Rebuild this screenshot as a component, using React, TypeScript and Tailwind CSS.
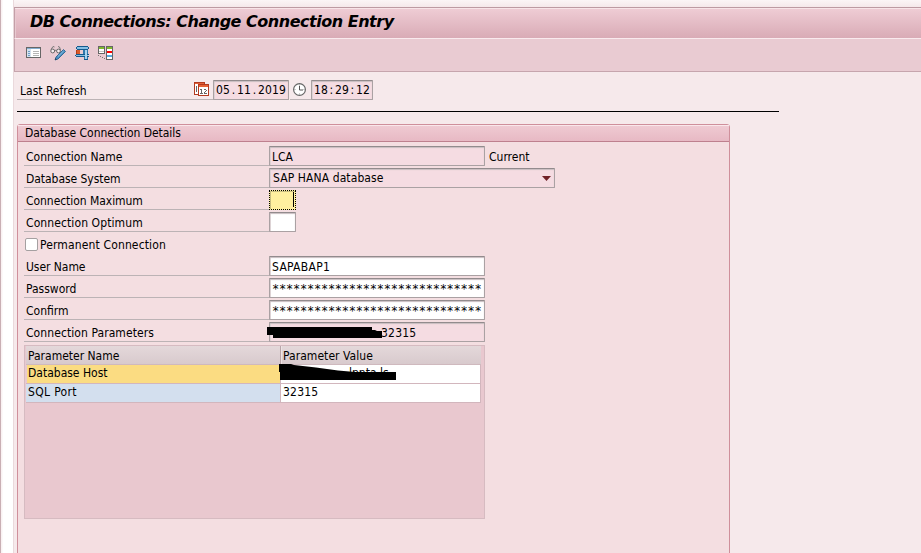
import type { ReactNode } from 'react';

const sans = "font-['DejaVu_Sans_Condensed','DejaVu_Sans',sans-serif] [font-stretch:condensed]";

function Label({ children, className = '' }: { children: ReactNode; className?: string }) {
  return <div className={`h-5 w-[245px] shrink-0 border-b border-[#bcb3b5] pl-[2px] leading-[22px] ${className}`}>{children}</div>;
}

function Field({ children, className }: { children?: ReactNode; className: string }) {
  return (
    <div
      className={`h-5 shrink-0 overflow-hidden rounded-[1px] border border-[#aaa1a3] border-t-[#928b8d] leading-[19px] whitespace-nowrap shadow-[inset_0_1px_1px_#c8bdc0,inset_1px_0_0_#dfd5d7] ${className}`}
    >
      {children}
    </div>
  );
}

function Row({ children }: { children: ReactNode }) {
  return <div className="flex h-[22px] pl-[6px]">{children}</div>;
}

/* Digits joined by separators that take the same advance as a digit. */
function Stamp({ parts, separator }: { parts: string[]; separator: string }) {
  return (
    <span className="tracking-[0.13px]">
      {parts.map((part, i) => (
        <span key={i}>
          {i > 0 && <span className="inline-block w-[7px] text-center">{separator}</span>}
          {part}
        </span>
      ))}
    </span>
  );
}

function ListIcon() {
  return (
    <svg width="16" height="16" viewBox="0 0 16 16" shapeRendering="crispEdges">
      <rect x="0.5" y="2.5" width="14" height="10" fill="#fff" stroke="#666" />
      <path d="M1 3h13v1H1z" fill="#85aed0" />
      <path d="M1 4h4v8H1z" fill="#d5e2ef" />
      <path d="M2 6h2v1H2zM2 8h2v1H2zM2 10h2v1H2z" fill="#6f9fc8" />
      <path d="M7 6h6v1H7zM7 8h6v1H7zM7 10h6v1H7z" fill="#b5b5b5" />
    </svg>
  );
}

function DisplayChangeIcon() {
  return (
    <svg width="17" height="16" viewBox="0 0 17 16">
      <path d="M1 4.500 3 1.500 4.500 2M8 1.500l1.500.5 1 3M4.500 5.300h2" fill="none" stroke="#777" />
      <circle cx="2.700" cy="6" r="1.900" fill="#f8eff1" stroke="#666" />
      <circle cx="8.500" cy="6" r="1.900" fill="#f8eff1" stroke="#666" />
      <path d="m6 12 7.500-7.500 2 2L8 14l-3 1z" fill="#4a90c2" stroke="#1f5b8a" strokeWidth=".8" />
      <path d="m8 11.500 5.600-5.500" stroke="#8bbddf" />
      <path d="m5 13 2 1.500-2 .5z" fill="#27435b" />
    </svg>
  );
}

function ClampIcon() {
  return (
    <svg width="15" height="16" viewBox="0 0 15 16" shapeRendering="crispEdges">
      <path d="M2 2h11v2H2zM1 10h12v1H1z" fill="#85bee4" />
      <path d="M2 1h11v1H2zM1 2h1v2H1zM2 4h11v1H2zM13 2h1v2h-1zM1 9h13v1H1zM0 10h1v1H0zM1 11h13v1H1z" fill="#135a8d" />
      <path d="M2 5h3v4H2z" fill="#d75a2b" />
      <path d="M1 5h1v4H1z" fill="#b63c16" />
      <path d="M8 5h5v4H8zM9 12h4v2H9z" fill="#2f78ad" />
      <path d="M10 5h2v9h-2z" fill="#a9d3ef" />
      <path d="M9 14h4v1H9z" fill="#135a8d" />
    </svg>
  );
}

function CompareIcon() {
  return (
    <svg width="16" height="16" viewBox="0 0 16 16" shapeRendering="crispEdges">
      <rect x=".5" y="1.500" width="6" height="7" fill="#fff" stroke="#666" />
      <path d="M1 2h5v2H1z" fill="#80b92d" />
      <path d="M1 6h5v1H1z" fill="#c5c5c5" />
      <rect x="8.500" y="1.500" width="6" height="13" fill="#fff" stroke="#666" />
      <path d="M9 2h5v2H9z" fill="#80b92d" />
      <path d="M9 6h5v2H9z" fill="#f00" />
      <path d="M9 10h5v2H9z" fill="#58a9dd" />
      <path d="M0 10h1v1H0zM2 11h1v1H2zM4 12h1v1H4zM6 13h1v1H6z" fill="#777" />
    </svg>
  );
}

function CalendarIcon() {
  return (
    <svg width="16" height="15" viewBox="0 0 16 15" shapeRendering="crispEdges">
      <rect x=".5" y=".5" width="10" height="12" fill="#fff" stroke="#b33a20" />
      <path d="M1 1h9v1H1z" fill="#e1613a" />
      <path d="M2 4h1v6H2z" fill="#666" />
      <rect x="4.500" y="2.500" width="10" height="11" fill="#fff" stroke="#b33a20" />
      <path d="M5 3h9v2H5z" fill="#e86235" />
      <path d="M6 7h2v1H6zM7 8h1v3H7zM6 11h3v1H6zM10 7h2v1h-2zM12 8h1v1h-1zM11 9h1v1h-1zM10 10h1v1h-1zM10 11h3v1h-3z" fill="#666" />
    </svg>
  );
}

function ClockIcon() {
  return (
    <svg width="15" height="15" viewBox="0 0 15 15">
      <circle cx="6.500" cy="6.500" r="5.900" fill="#fff" stroke="#666" strokeWidth="1.200" />
      <path d="M6.500 3v4H10" fill="none" stroke="#555" />
      <path d="M6.500 1.500v1M6.500 10.500v1M1.500 6.500h1M10.500 6.500h1" stroke="#999" />
    </svg>
  );
}

export default function App() {
  return (
    <div className={`flex h-[553px] w-[921px] overflow-hidden bg-[#f6e9eb] text-[12px] text-black ${sans}`}>
      <aside className="w-[13px] shrink-0 border-l border-[#c9afb4] bg-gradient-to-r from-[#f8eeef] via-white via-20% to-white" />
      <main className="min-w-0 flex-1 border-l border-[#ead9dc]">
        <div className="h-[7px] bg-gradient-to-b from-[#fbf5f6] to-[#f5e8ea]" />
        <header className="h-8 border-y border-l border-t-[#bd9aa2] border-b-[#f9eaee] border-l-[#c49fa8] bg-gradient-to-b from-[#efcdd5] to-[#d9abb6] pl-[15px] leading-[27px] shadow-[inset_0_1px_0_#f8e4e8,inset_1px_0_0_#e8c9d0]">
          <h1 className="inline-block font-['DejaVu_Sans',sans-serif] text-[16px] font-bold tracking-[-0.48px] whitespace-nowrap italic [font-stretch:normal]">DB Connections: Change Connection Entry</h1>
        </header>
        <nav className="flex h-[33px] border-b border-l border-[#c6a5ad] bg-[#e9cbd2] pt-[6px] pl-[11px]">
          <div className="w-6"><ListIcon /></div>
          <div className="w-[25px]"><DisplayChangeIcon /></div>
          <div className="w-[23px]"><ClampIcon /></div>
          <CompareIcon />
        </nav>
        <div className="flex h-7 pt-2 pl-[3px]">
          <div className="flex h-5 w-[196px] justify-between border-b border-[#bcb3b5] pr-[3px] pl-[3px] leading-[22px]">
            <span>Last Refresh</span>
            <span className="pt-[2px]"><CalendarIcon /></span>
          </div>
          <Field className="w-[76px] bg-[#f5dce2] pl-[2px]"><Stamp parts={['05', '11', '2019']} separator="." /></Field>
          <div className="ml-[1px] h-5 w-[21px] border-b border-[#bcb3b5] pt-[3px] pl-[3px]"><ClockIcon /></div>
          <Field className="w-[62px] bg-[#f5dce2] pl-[2px]"><Stamp parts={['18', '29', '12']} separator=":" /></Field>
        </div>
        <div className="mt-[11px] ml-[3px] h-px w-[762px] bg-black" />
        <section className="mt-3 ml-[3px] h-[440px] w-[713px] rounded-t-[3px] border border-[#cf8f9b] bg-[#f4dee1]">
          <h2 className="h-[17px] border-b border-[#be808e] bg-gradient-to-b from-[#efcbd3] to-[#e7b9c4] pl-[7px] leading-[16px] tracking-[-0.04px] shadow-[inset_0_1px_0_#f9e7eb]">Database Connection Details</h2>
          <div className="pt-1">
            <Row>
              <Label>Connection Name</Label>
              <Field className="w-[216px] bg-[#f5dce2] pt-px pl-[2px]">LCA</Field>
              <span className="pl-[4px] leading-[22px]">Current</span>
            </Row>
            <Row>
              <Label className="tracking-[-0.05px]">Database System</Label>
              <Field className="flex w-[286px] items-center justify-between bg-[#f5dce2] pr-[3px] pl-[3px]">
                <span className="tracking-[0.1px]">SAP HANA database</span>
                <svg width="9" height="5" viewBox="0 0 9 5"><path d="M0 0h9L4.500 5z" fill="#702127" /></svg>
              </Field>
            </Row>
            <Row>
              <Label className="tracking-[-0.05px]">Connection Maximum</Label>
              <div className="flex h-5 w-[27px] justify-end border border-dotted border-black bg-[#fff09f] pt-px pr-px shadow-[inset_1px_1px_0_#c8bd80]"><div className="h-[15px] w-px bg-black" /></div>
            </Row>
            <Row>
              <Label className="tracking-[0.1px]">Connection Optimum</Label>
              <Field className="w-[27px] bg-white" />
            </Row>
            <Row>
              <div className="mt-[4px] ml-px h-[13px] w-[13px] rounded-[2px] border border-[#a5a0a1] bg-white" />
              <span className="pl-[2px] leading-[22px] tracking-[0.14px]">Permanent Connection</span>
            </Row>
            <Row>
              <Label className="tracking-[-0.05px]">User Name</Label>
              <Field className="w-[216px] bg-white pt-px pl-[2px] tracking-[0.3px]">SAPABAP1</Field>
            </Row>
            <Row>
              <Label>Password</Label>
              <Field className="w-[216px] bg-white pt-px pl-[2px] font-['DejaVu_Sans_Mono',monospace] tracking-[-0.24px]">******************************</Field>
            </Row>
            <Row>
              <Label>Confirm</Label>
              <Field className="w-[216px] bg-white pt-px pl-[2px] font-['DejaVu_Sans_Mono',monospace] tracking-[-0.24px]">******************************</Field>
            </Row>
            <Row>
              <Label className="tracking-[0.08px]">Connection Parameters</Label>
              <div className="relative">
                <Field className="w-[216px] bg-[#f5dce2] pt-px pl-[111px] tracking-[0.2px]">32315</Field>
                <svg className="absolute -top-[1px] -left-[2px]" width="120" height="20" viewBox="0 0 120 20">
                  <path d="M0 6h105v3h3l2 1h5v7H6v-3H0z" fill="#000" />
                </svg>
              </div>
            </Row>
          </div>
          <div className="mt-px ml-[6px] h-[174px] w-[461px] border border-[#d6bbc1] bg-[#e9c8cf]">
            <div className="ml-px flex h-[19px] w-[455px] border-b border-[#cfb9be] bg-gradient-to-b from-[#e4d8da] to-[#d8cacd] leading-[20px]">
              <div className="w-[255px] border-r border-[#b9a5a9] pl-[2px]">Parameter Name</div>
              <div className="border-l border-[#eee3e5] pl-px tracking-[0.05px]">Parameter Value</div>
            </div>
            <div className="relative ml-px flex h-[19px] w-[455px] border-r border-b border-[#d2b6bd] leading-[16px]">
              <div className="ml-px w-[253px] bg-[#fbdc82] pl-px">Database Host</div>
              <div className="h-[18px] flex-1 overflow-hidden border-l border-[#d2b6bd] bg-white pl-[68px]">lpnta.ls</div>
              <svg className="absolute -top-[1px] left-[253px]" width="120" height="19" viewBox="0 0 120 19">
                <path d="M0 0h12l3 1 22 2.500 22 3L76 8h41v8H1V8H0z" fill="#000" />
              </svg>
            </div>
            <div className="ml-px flex h-[19px] w-[455px] border-r border-b border-[#d2b6bd] leading-[17px]">
              <div className="w-[254px] bg-[#d3dfee] pl-[2px] tracking-[0.35px]">SQL Port</div>
              <div className="flex-1 border-l border-[#d2b6bd] bg-white pl-[2px] tracking-[0.2px]">32315</div>
            </div>
          </div>
        </section>
      </main>
    </div>
  );
}
